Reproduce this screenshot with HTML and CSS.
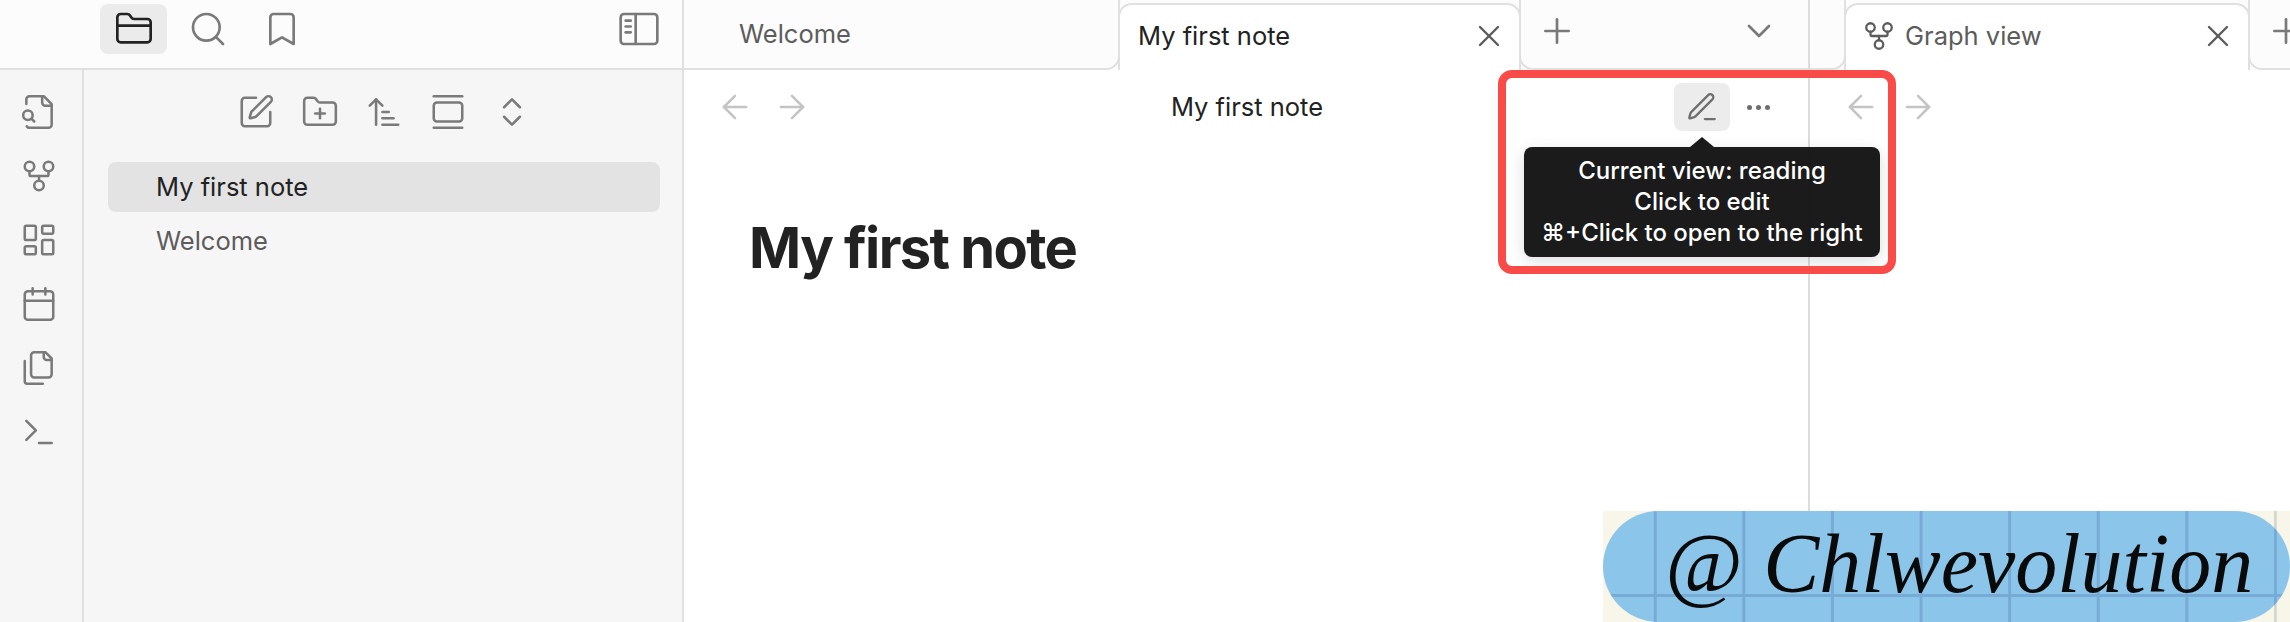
FILE: index.html
```html
<!DOCTYPE html>
<html lang="en">
<head>
<meta charset="UTF-8">
<meta name="viewport" content="width=device-width, initial-scale=1.0">
<title>My first note</title>
<link rel="stylesheet" href="styles.css">
</head>
<body>

<svg class="icon-defs" xmlns="http://www.w3.org/2000/svg">
  <symbol id="i-folder" viewBox="0 0 24 24"><path d="M4 20h16a2 2 0 0 0 2-2V8a2 2 0 0 0-2-2h-7.9a2 2 0 0 1-1.69-.9L9.6 3.9A2 2 0 0 0 7.93 3H4a2 2 0 0 0-2 2v13c0 1.1.9 2 2 2Z"/><path d="M2 10h20"/></symbol>
  <symbol id="i-search" viewBox="0 0 24 24"><circle cx="11" cy="11" r="8"/><path d="m21 21-4.3-4.3"/></symbol>
  <symbol id="i-bookmark" viewBox="0 0 24 24"><path d="m19 21-7-4-7 4V5a2 2 0 0 1 2-2h10a2 2 0 0 1 2 2v16z"/></symbol>
  <symbol id="i-sidebar" viewBox="0 0 24 24"><rect x="1" y="3" width="22" height="18" rx="2"/><path d="M10 3v18"/><path d="M4 7h3"/><path d="M4 10.500h3"/><path d="M4 14h3"/></symbol>
  <symbol id="i-file-search" viewBox="0 0 24 24"><path d="M14 2v4a2 2 0 0 0 2 2h4"/><path d="M4.268 21a2 2 0 0 0 1.727 1H18a2 2 0 0 0 2-2V7l-5-5H6a2 2 0 0 0-2 2v3"/><path d="m9 18-1.495-1.495"/><circle cx="5" cy="14" r="3"/></symbol>
  <symbol id="i-graph" viewBox="0 0 24 24"><circle cx="12" cy="18" r="3"/><circle cx="6" cy="6" r="3"/><circle cx="18" cy="6" r="3"/><path d="M18 9v2c0 .6-.4 1-1 1H7c-.6 0-1-.4-1-1V9"/><path d="M12 12v3"/></symbol>
  <symbol id="i-dashboard" viewBox="0 0 24 24"><rect x="3" y="3" width="7" height="9" rx="1"/><rect x="14" y="3" width="7" height="5" rx="1"/><rect x="14" y="12" width="7" height="9" rx="1"/><rect x="3" y="16" width="7" height="5" rx="1"/></symbol>
  <symbol id="i-calendar" viewBox="0 0 24 24"><path d="M8 2v4"/><path d="M16 2v4"/><rect x="3" y="4" width="18" height="18" rx="2"/><path d="M3 10h18"/></symbol>
  <symbol id="i-files" viewBox="0 0 24 24"><path d="M20 7h-3a2 2 0 0 1-2-2V2"/><path d="M9 18a2 2 0 0 1-2-2V4a2 2 0 0 1 2-2h7l4 4v10a2 2 0 0 1-2 2Z"/><path d="M3 7.600v12.800A1.600 1.600 0 0 0 4.600 22h9.800"/></symbol>
  <symbol id="i-terminal" viewBox="0 0 24 24"><path d="m4 17 6-6-6-6"/><path d="M12 19h8"/></symbol>
  <symbol id="i-new-note" viewBox="0 0 24 24"><path d="M12 3H5a2 2 0 0 0-2 2v14a2 2 0 0 0 2 2h14a2 2 0 0 0 2-2v-7"/><path d="M18.375 2.625a1 1 0 0 1 3 3l-9.013 9.014a2 2 0 0 1-.853.505l-2.873.84a.5.5 0 0 1-.62-.62l.84-2.873a2 2 0 0 1 .506-.852z"/></symbol>
  <symbol id="i-new-folder" viewBox="0 0 24 24"><path d="M12 10v6"/><path d="M9 13h6"/><path d="M20 20a2 2 0 0 0 2-2V8a2 2 0 0 0-2-2h-7.900a2 2 0 0 1-1.690-.9L9.600 3.900A2 2 0 0 0 7.930 3H4a2 2 0 0 0-2 2v13a2 2 0 0 0 2 2Z"/></symbol>
  <symbol id="i-sort" viewBox="0 0 24 24"><path d="m3 8 4-4 4 4"/><path d="M7 4v16"/><path d="M11 12h4"/><path d="M11 16h7"/><path d="M11 20h10"/></symbol>
  <symbol id="i-collapse" viewBox="0 0 24 24"><path d="M3 2h18"/><rect x="3" y="6" width="18" height="12" rx="2"/><path d="M3 22h18"/></symbol>
  <symbol id="i-chevrons" viewBox="0 0 24 24"><path d="m7 15 5 5 5-5"/><path d="m7 9 5-5 5 5"/></symbol>
  <symbol id="i-close" viewBox="0 0 24 24"><path d="M18 6 6 18"/><path d="m6 6 12 12"/></symbol>
  <symbol id="i-plus" viewBox="0 0 24 24"><path d="M5 12h14"/><path d="M12 5v14"/></symbol>
  <symbol id="i-chevron-down" viewBox="0 0 24 24"><path d="m6 9 6 6 6-6"/></symbol>
  <symbol id="i-back" viewBox="0 0 24 24"><path d="m12 19-7-7 7-7"/><path d="M19 12H5"/></symbol>
  <symbol id="i-forward" viewBox="0 0 24 24"><path d="M5 12h14"/><path d="m12 5 7 7-7 7"/></symbol>
  <symbol id="i-pencil" viewBox="0 0 24 24"><path d="M14 20.500h7"/><path d="M16.376 3.622a1 1 0 0 1 3.002 3.002L7.368 18.635a2 2 0 0 1-.855.506l-2.872.838a.5.5 0 0 1-.62-.62l.838-2.872a2 2 0 0 1 .506-.854z"/></symbol>
</svg>

<div class="app">

  <div class="left-panel">
    <div class="left-top">
      <div class="top-btn active"><svg class="icon"><use href="#i-folder"/></svg></div>
      <div class="top-btn"><svg class="icon"><use href="#i-search"/></svg></div>
      <div class="top-btn"><svg class="icon"><use href="#i-bookmark"/></svg></div>
      <div class="top-btn toggle"><svg class="icon"><use href="#i-sidebar"/></svg></div>
    </div>
    <div class="left-body">
      <div class="ribbon">
        <div class="ribbon-btn"><svg class="icon"><use href="#i-file-search"/></svg></div>
        <div class="ribbon-btn"><svg class="icon"><use href="#i-graph"/></svg></div>
        <div class="ribbon-btn"><svg class="icon"><use href="#i-dashboard"/></svg></div>
        <div class="ribbon-btn"><svg class="icon"><use href="#i-calendar"/></svg></div>
        <div class="ribbon-btn"><svg class="icon"><use href="#i-files"/></svg></div>
        <div class="ribbon-btn"><svg class="icon"><use href="#i-terminal"/></svg></div>
      </div>
      <div class="files">
        <div class="files-nav">
          <div class="nav-btn"><svg class="icon"><use href="#i-new-note"/></svg></div>
          <div class="nav-btn"><svg class="icon"><use href="#i-new-folder"/></svg></div>
          <div class="nav-btn"><svg class="icon"><use href="#i-sort"/></svg></div>
          <div class="nav-btn"><svg class="icon"><use href="#i-collapse"/></svg></div>
          <div class="nav-btn"><svg class="icon"><use href="#i-chevrons"/></svg></div>
        </div>
        <div class="file-item selected">My first note</div>
        <div class="file-item">Welcome</div>
      </div>
    </div>
  </div>

  <div class="main-pane">
    <div class="tab-bar">
      <div class="tab-plain welcome-tab">Welcome</div>
      <div class="tab note-tab">
        <span class="tab-title">My first note</span>
        <svg class="icon icon-close"><use href="#i-close"/></svg>
      </div>
      <div class="tab-rest">
        <svg class="icon icon-plus"><use href="#i-plus"/></svg>
        <svg class="icon icon-plus tab-list"><use href="#i-chevron-down"/></svg>
      </div>
    </div>
    <div class="view-header">
      <div class="view-nav">
        <div class="arrow-btn"><svg class="icon"><use href="#i-back"/></svg></div>
        <div class="arrow-btn"><svg class="icon"><use href="#i-forward"/></svg></div>
      </div>
      <div class="view-title">My first note</div>
      <div class="view-actions">
        <div class="action-btn hovered"><svg class="icon icon-pencil"><use href="#i-pencil"/></svg></div>
        <div class="action-btn">
          <span class="dot"></span><span class="dot"></span><span class="dot"></span>
        </div>
      </div>
    </div>
    <div class="note">
      <h1>My first note</h1>
    </div>
  </div>

  <div class="right-pane">
    <div class="tab-bar">
      <div class="tab-plain gap-tab"></div>
      <div class="tab graph-tab">
        <svg class="icon icon-graph"><use href="#i-graph"/></svg>
        <span class="tab-title">Graph view</span>
        <svg class="icon icon-close"><use href="#i-close"/></svg>
      </div>
      <div class="tab-rest">
        <svg class="icon icon-plus"><use href="#i-plus"/></svg>
      </div>
    </div>
    <div class="view-header right-header">
      <div class="view-nav">
        <div class="arrow-btn"><svg class="icon"><use href="#i-back"/></svg></div>
        <div class="arrow-btn"><svg class="icon"><use href="#i-forward"/></svg></div>
      </div>
    </div>
  </div>

</div>

<div class="tooltip">
  Current view: reading<br>
  Click to edit<br>
  ⌘+Click to open to the right
</div>
<div class="highlight"></div>

<div class="watermark">
  <div class="watermark-pill">@ Chlwevolution</div>
</div>

</body>
</html>
```

FILE: styles.css
```css
body {
  margin: 0;
  height: 622px;
  overflow: hidden;
  position: relative;
  font-family: Inter, "Noto Sans", "DejaVu Sans", sans-serif;
  font-size: 25.500px;
  color: #222;
  background-color: #fff;
}

.icon-defs {
  display: none;
}

.icon {
  width: 38px;
  height: 38px;
  fill: none;
  stroke: currentColor;
  stroke-width: 1.6;
  stroke-linecap: round;
  stroke-linejoin: round;
  flex: none;
}

.app {
  display: flex;
  height: 622px;
}

/* left sidebar */
.left-panel {
  width: 682px;
  border-right: 2px solid #e0e0e0;
  display: flex;
  flex-direction: column;
  background-color: #f6f6f6;
  flex: none;
}

.left-top {
  box-sizing: border-box;
  height: 70px;
  border-bottom: 2px solid #e0e0e0;
  background-color: #fcfcfc;
  display: flex;
  align-items: center;
  gap: 7px;
  padding: 0 10px 10px 100px;
  color: #7a7a7a;
}

.top-btn {
  width: 67px;
  height: 50px;
  border-radius: 8px;
  display: flex;
  align-items: center;
  justify-content: center;
}

.top-btn .icon {
  width: 40px;
  height: 40px;
}

.top-btn.active {
  background-color: #ebebeb;
  color: #222;
}

.top-btn.toggle {
  margin-left: auto;
}

.left-body {
  flex: 1;
  display: flex;
}

.ribbon {
  width: 78px;
  padding: 10px 4px 0 0;
  border-right: 2px solid #e0e0e0;
  color: #7a7a7a;
}

.ribbon-btn {
  height: 64px;
  display: flex;
  align-items: center;
  justify-content: center;
}

.files {
  flex: 1;
  padding: 17px 22px 0 24px;
}

.files-nav {
  display: flex;
  justify-content: center;
  color: #7a7a7a;
  margin: 0 -22px 25px -22px;
}

.nav-btn {
  width: 64px;
  height: 50px;
  display: flex;
  align-items: center;
  justify-content: center;
}

.file-item {
  height: 50px;
  line-height: 50px;
  padding-left: 48px;
  margin-bottom: 4px;
  border-radius: 8px;
  color: #5c5c5c;
}

.file-item.selected {
  background-color: #e3e3e3;
  color: #222;
}

/* tabs */
.tab-bar {
  height: 70px;
  display: flex;
  background-color: #fcfcfc;
}

.tab-plain {
  box-sizing: border-box;
  height: 70px;
  border-bottom: 2px solid #e0e0e0;
  border-right: 2px solid #e0e0e0;
  border-bottom-right-radius: 14px;
  color: #5c5c5c;
  line-height: 68px;
  flex: none;
}

.welcome-tab {
  width: 436px;
  padding-left: 55px;
}

.gap-tab {
  width: 36px;
}

.tab {
  box-sizing: border-box;
  width: 403px;
  height: 67px;
  margin: 3px 0 0 -2px;
  padding-bottom: 4px;
  display: flex;
  align-items: center;
  border: 2px solid #e0e0e0;
  border-bottom: none;
  border-radius: 14px 14px 0 0;
  background-color: #fff;
  flex: none;
}

.note-tab {
  padding-left: 18px;
  padding-right: 12px;
}

.graph-tab {
  width: 406px;
  padding-left: 16px;
  padding-right: 12px;
  color: #5c5c5c;
}

.tab-title {
  flex: 1;
}

.icon-close {
  width: 36px;
  height: 36px;
  color: #5c5c5c;
}

.icon-graph {
  width: 34px;
  height: 34px;
  margin-right: 9px;
}

.tab-rest {
  box-sizing: border-box;
  flex: 1;
  margin-left: -2px;
  height: 70px;
  border-bottom: 2px solid #e0e0e0;
  border-left: 2px solid #e0e0e0;
  border-bottom-left-radius: 14px;
  display: flex;
  align-items: flex-start;
  padding: 11px 0 0 16px;
  color: #7a7a7a;
}

.icon-plus {
  width: 40px;
  height: 40px;
}

.tab-list {
  margin-left: 162px;
}

/* note panes */
.main-pane {
  width: 1124px;
  border-right: 2px solid #dcdcdc;
  flex: none;
}

.right-pane {
  flex: 1;
}

.view-header {
  height: 74px;
  display: grid;
  grid-template-columns: 1fr auto 1fr;
  align-items: center;
  padding: 0 22px;
}

.right-header {
  padding-left: 22px;
}

.view-nav {
  display: flex;
  color: #c4c4c4;
}

.arrow-btn {
  width: 57px;
  display: flex;
  justify-content: center;
}

.view-title {
  color: #222;
  padding: 0 0 2px 2px;
}

.view-actions {
  display: flex;
  justify-content: flex-end;
  color: #6e6e6e;
}

.action-btn {
  width: 56px;
  height: 48px;
  border-radius: 8px;
  display: flex;
  align-items: center;
  justify-content: center;
  gap: 4px;
}

.action-btn.hovered {
  background-color: #ececec;
}

.icon-pencil {
  width: 34px;
  height: 34px;
}

.dot {
  width: 5px;
  height: 5px;
  border-radius: 50%;
  background-color: #6e6e6e;
}

.note {
  padding: 69px 0 0 65px;
}

h1 {
  margin: 0;
  font-size: 56px;
  line-height: 70px;
  font-weight: 700;
  letter-spacing: -1.600px;
  color: #222;
}

/* overlays */
.tooltip {
  position: absolute;
  left: 1524px;
  top: 147px;
  width: 356px;
  height: 110px;
  box-sizing: border-box;
  padding-top: 8px;
  border-radius: 8px;
  background-color: rgba(20, 20, 20, 0.97);
  box-shadow: 0 4px 16px rgba(0, 0, 0, 0.14);
  color: #fff;
  font-size: 24px;
  font-weight: 500;
  line-height: 31px;
  text-align: center;
  white-space: nowrap;
}

.tooltip::before {
  content: "";
  position: absolute;
  left: 166px;
  top: -10px;
  border-left: 12px solid transparent;
  border-right: 12px solid transparent;
  border-bottom: 10px solid #1a1a1a;
}

.highlight {
  position: absolute;
  left: 1498px;
  top: 70px;
  width: 382px;
  height: 188px;
  border: 8px solid #f94c49;
  border-radius: 14px;
}

.watermark {
  position: absolute;
  left: 1603px;
  top: 511px;
  width: 687px;
  height: 111px;
  background-color: #f8f5e9;
  background-image: linear-gradient(90deg, transparent 51px, #d8d8d0 51px, #d8d8d0 54px, transparent 54px);
  background-size: 88.600px 100%;
}

.watermark-pill {
  height: 111px;
  border-radius: 56px;
  box-sizing: border-box;
  padding-left: 62px;
  background-color: #8cc5ea;
  background-image:
    linear-gradient(#78aad6, #78aad6),
    linear-gradient(90deg, transparent 51px, #78aad6 51px, #78aad6 54px, transparent 54px);
  background-size: 100% 3px, 88.600px 100%;
  background-position: 0 83px, 0 0;
  background-repeat: no-repeat, repeat-x;
  font-family: "Liberation Serif", serif;
  font-style: italic;
  font-size: 84px;
  line-height: 106px;
  color: #0a0a0a;
  white-space: nowrap;
}
```
